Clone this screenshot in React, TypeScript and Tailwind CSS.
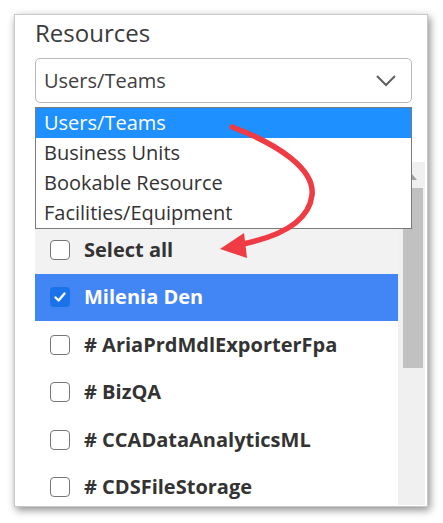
import React from "react"

const OPTIONS = ["Users/Teams", "Business Units", "Bookable Resource", "Facilities/Equipment"]

const ROWS = [
  { label: "Select all", checked: false, head: true },
  { label: "Milenia Den", checked: true },
  { label: "# AriaPrdMdlExporterFpa", checked: false },
  { label: "# BizQA", checked: false },
  { label: "# CCADataAnalyticsML", checked: false },
  { label: "# CDSFileStorage", checked: false },
]

function Check({ on }: { on: boolean }) {
  if (on) {
    return (
      <span className="w-[20px] h-[20px] rounded-[4px] bg-[#1a73e8] flex items-center justify-center shrink-0">
        <svg width="14" height="14" viewBox="0 0 14 14">
          <path d="M2.5 7.5 L5.6 10.5 L11.5 3.5" fill="none" stroke="white" strokeWidth="2.4" strokeLinecap="round" strokeLinejoin="round" />
        </svg>
      </span>
    )
  }
  return <span className="w-[20px] h-[20px] rounded-[4px] border-[1.5px] border-[#767676] bg-white shrink-0" />
}

export default function App() {
  return (
    <div className="w-[443px] h-[523px] bg-white pt-[14px] pl-[14px]" style={{ fontFamily: '"Open Sans", sans-serif' }}>
      <div className="relative w-[414px] h-[493px] bg-white border border-[#c8c8c8] shadow-[2px_3px_8px_rgba(0,0,0,0.45)] pl-[20px] flex flex-col overflow-hidden">
        <div className="shrink-0 text-[24px] leading-[30px] text-[#3a3a3a] mt-[3px]">Resources</div>
        <div className="shrink-0 mt-[10px] w-[377px] h-[45px] rounded-[5px] border border-[#b9b9b9] flex items-center justify-between pl-[8px] pr-[14px]">
          <span className="text-[20px] text-[#404040]">Users/Teams</span>
          <svg width="22" height="14" viewBox="0 0 22 14">
            <path d="M2 2 L11 11 L20 2" fill="none" stroke="#606060" strokeWidth="2" />
          </svg>
        </div>

        {/* list panel behind the dropdown */}
        <div className="mt-[59px] flex flex-1 min-h-0 mb-[1px]">
          <div className="w-[363px] flex flex-col pt-[64px] bg-white overflow-hidden">
            {ROWS.map((r) => (
              <div
                key={r.label}
                className={
                  "h-[47.5px] shrink-0 flex items-center gap-[14px] pl-[15px] text-[20px] font-bold " +
                  (r.checked ? "bg-[#4285f4] text-white" : r.head ? "bg-[#f2f2f2] text-[#333]" : "bg-white text-[#333]")
                }
              >
                <Check on={r.checked} />
                <span>{r.label}</span>
              </div>
            ))}
          </div>
          <div className="w-[27px] bg-[#f0f0f0] flex flex-col items-center pt-[12px]">
            <svg width="10" height="6" viewBox="0 0 10 6">
              <path d="M0 6 L5 0 L10 6 Z" fill="#a0a0a0" />
            </svg>
            <div className="mt-[8px] ml-[2px] w-[20px] h-[180px] bg-[#c1c1c1]" />
          </div>
        </div>

        {/* open dropdown */}
        <div className="absolute left-[20px] top-[92px] w-[377px] bg-white border border-[#7a7a7a] flex flex-col">
          {OPTIONS.map((o, i) => (
            <div
              key={o}
              className={
                "h-[30px] flex items-center pl-[8px] text-[20px] " +
                (i === 0 ? "bg-[#1e90ff] text-white" : "text-[#333]")
              }
            >
              {o}
            </div>
          ))}
        </div>

        {/* red annotation arrow */}
        <svg className="absolute left-[-15px] top-[-15px] pointer-events-none" width="443" height="523" viewBox="0 0 443 523">
          <path d="M232 127 C 280 145, 315 170, 312 195 C 309 222, 280 237, 238 245" fill="none" stroke="#ef3b43" strokeWidth="5.5" strokeLinecap="round" />
          <path d="M220 249 L244 233 L247 258 Z" fill="#ef3b43" />
        </svg>
      </div>
    </div>
  )
}
